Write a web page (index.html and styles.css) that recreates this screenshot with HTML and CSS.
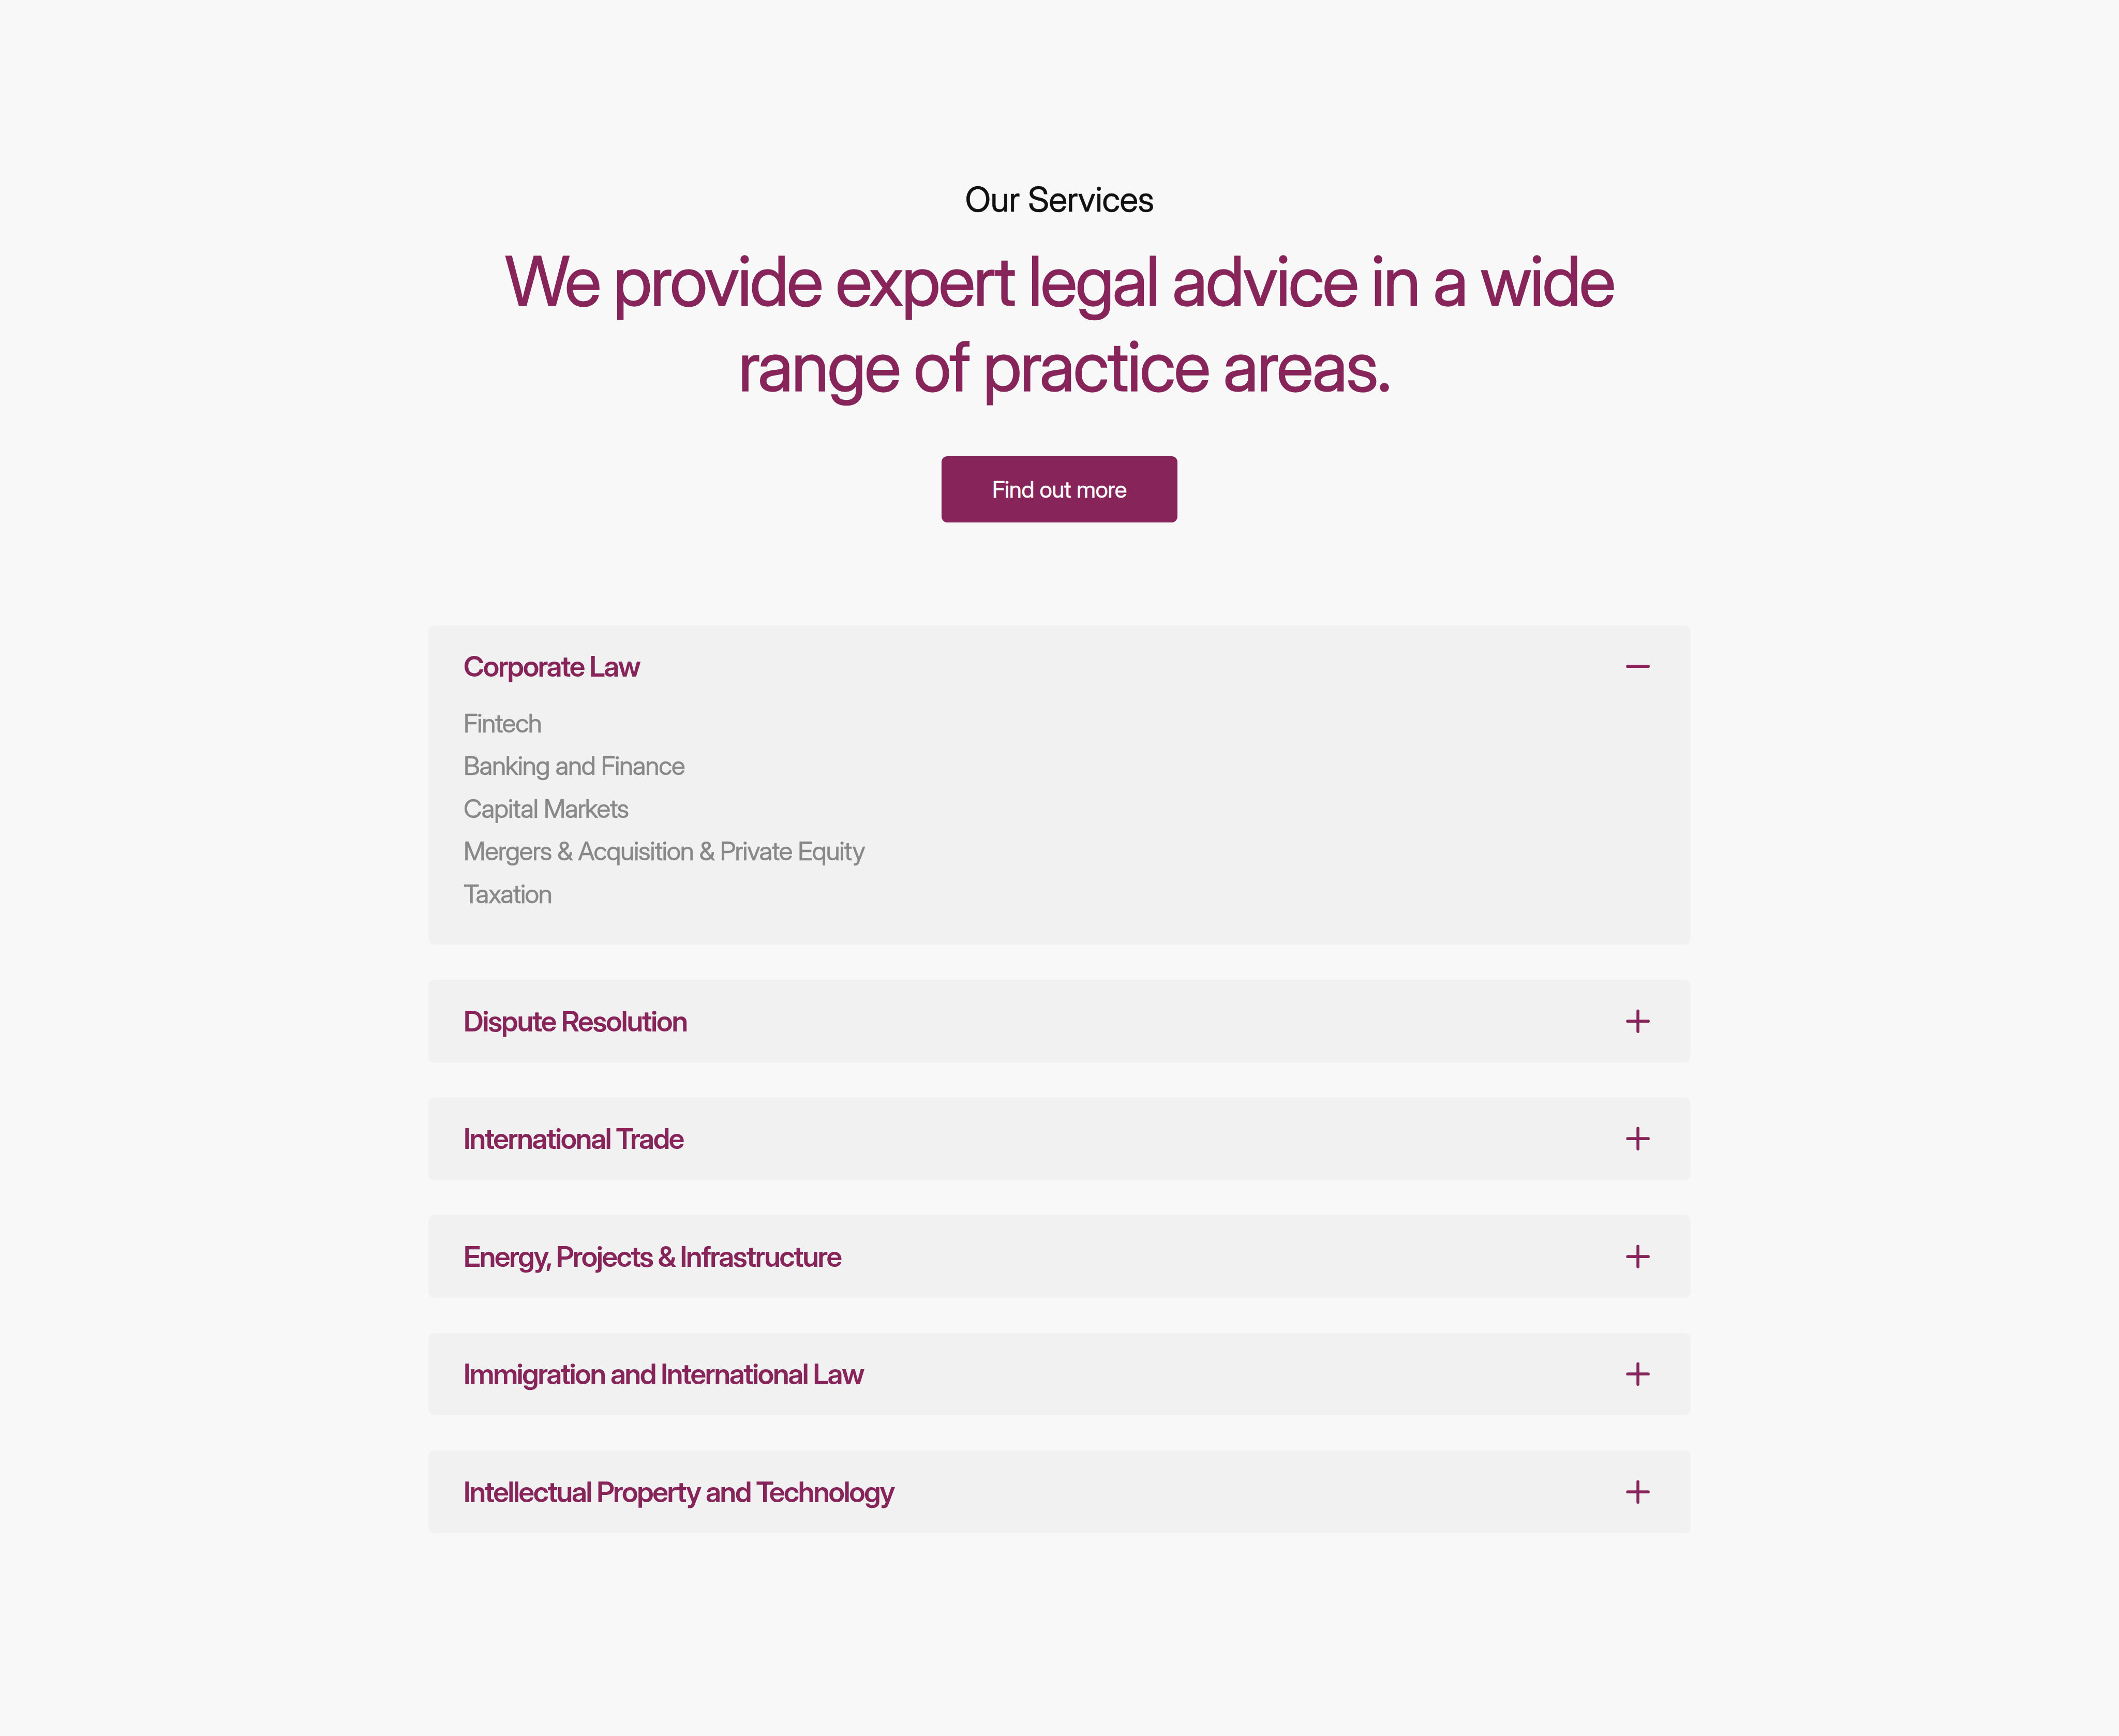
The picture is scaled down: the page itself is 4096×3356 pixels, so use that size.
FILE: index.html
```
<!DOCTYPE html>
<html lang="en">
  <head>
    <meta charset="UTF-8" />
    <meta name="viewport" content="width=device-width, initial-scale=1.0" />
    <title>Our Services</title>
    <link rel="stylesheet" href="styles.css" />
  </head>
  <body>
    <!-- reusable accordion icons -->
    <svg class="icon-symbols">
      <symbol id="minus" viewBox="0 0 24 24">
        <line x1="5" y1="12" x2="19" y2="12"></line>
      </symbol>
      <symbol id="plus" viewBox="0 0 24 24">
        <line x1="5" y1="12" x2="19" y2="12"></line>
        <line x1="12" y1="5" x2="12" y2="19"></line>
      </symbol>
    </svg>

    <section class="services">
      <p class="services-label">Our Services</p>
      <h1 class="services-title">
        <span class="line">We provide expert legal advice in a wide</span>
        <span class="line line-last">range of practice areas.</span>
      </h1>
      <a class="btn" href="#">Find out more</a>

      <div class="accordion">
        <div class="item open">
          <div class="item-header">
            <h2 class="item-title">Corporate Law</h2>
            <svg class="icon"><use href="#minus"></use></svg>
          </div>
          <ul class="item-list">
            <li>Fintech</li>
            <li>Banking and Finance</li>
            <li>Capital Markets</li>
            <li>Mergers &amp; Acquisition &amp; Private Equity</li>
            <li>Taxation</li>
          </ul>
        </div>

        <div class="item">
          <div class="item-header">
            <h2 class="item-title loose">Dispute Resolution</h2>
            <svg class="icon"><use href="#plus"></use></svg>
          </div>
        </div>

        <div class="item">
          <div class="item-header">
            <h2 class="item-title">International Trade</h2>
            <svg class="icon"><use href="#plus"></use></svg>
          </div>
        </div>

        <div class="item">
          <div class="item-header">
            <h2 class="item-title">Energy, Projects &amp; Infrastructure</h2>
            <svg class="icon"><use href="#plus"></use></svg>
          </div>
        </div>

        <div class="item">
          <div class="item-header">
            <h2 class="item-title">Immigration and International Law</h2>
            <svg class="icon"><use href="#plus"></use></svg>
          </div>
        </div>

        <div class="item">
          <div class="item-header">
            <h2 class="item-title">Intellectual Property and Technology</h2>
            <svg class="icon"><use href="#plus"></use></svg>
          </div>
        </div>
      </div>
    </section>
  </body>
</html>
```
FILE: styles.css
```
* {
  box-sizing: border-box;
  margin: 0;
  padding: 0;
}

/* 1rem = 10px on a 1440px wide layout */
html {
  font-size: calc(100vw / 144);
}

body {
  background: #f8f8f8;
  color: #111;
  font-family: "Inter Display", Inter, sans-serif;
}

.icon-symbols {
  position: absolute;
  width: 0;
  height: 0;
}

.services {
  display: flex;
  flex-direction: column;
  align-items: center;
  padding: 12.1rem 0 13.8rem;
}

.services-label {
  font-size: 2.33rem;
  line-height: 2.9rem;
  letter-spacing: -0.0075em;
  -webkit-text-stroke: 0.01em;
}

.services-title {
  margin-top: 1.2rem;
  color: #87255b;
  font-size: 4.656rem;
  font-weight: 400;
  line-height: 5.8rem;
  letter-spacing: -0.0265em;
  word-spacing: -0.0225em;
  text-align: center;
  -webkit-text-stroke: 0.01em;
}

.line {
  display: block;
}

.line-last {
  padding-left: 0.65rem;
  letter-spacing: -0.0235em;
}

.btn {
  display: flex;
  justify-content: center;
  align-items: center;
  width: 16rem;
  height: 4.5rem;
  margin-top: 3.2rem;
  border-radius: 0.4rem;
  background: #87255b;
  color: #fff;
  font-size: 1.55rem;
  letter-spacing: -0.009em;
  text-decoration: none;
  -webkit-text-stroke: 0.01em;
}

.accordion {
  display: flex;
  flex-direction: column;
  gap: 2.4rem;
  width: 85.8rem;
  margin-top: 7rem;
}

.item {
  padding: 1.6rem 2.4rem;
  border-radius: 0.4rem;
  background: #f1f1f1;
}

.item.open {
  padding-bottom: 2rem;
}

.item-header {
  display: flex;
  justify-content: space-between;
  align-items: center;
  height: 2.4rem;
}

.item-title {
  color: #87255b;
  font-size: 1.945rem;
  font-weight: 600;
  line-height: 2.4rem;
  letter-spacing: -0.0425em;
}

.item-title.loose {
  letter-spacing: -0.038em;
}

.icon {
  width: 2.4rem;
  height: 2.4rem;
  fill: none;
  stroke: #87255b;
  stroke-width: 2;
  stroke-linecap: round;
}

.item-list {
  margin-top: 1.2rem;
  color: #888;
  font-size: 1.75rem;
  line-height: 2.9rem;
  letter-spacing: -0.0265em;
  list-style: none;
  -webkit-text-stroke: 0.01em;
}
```
